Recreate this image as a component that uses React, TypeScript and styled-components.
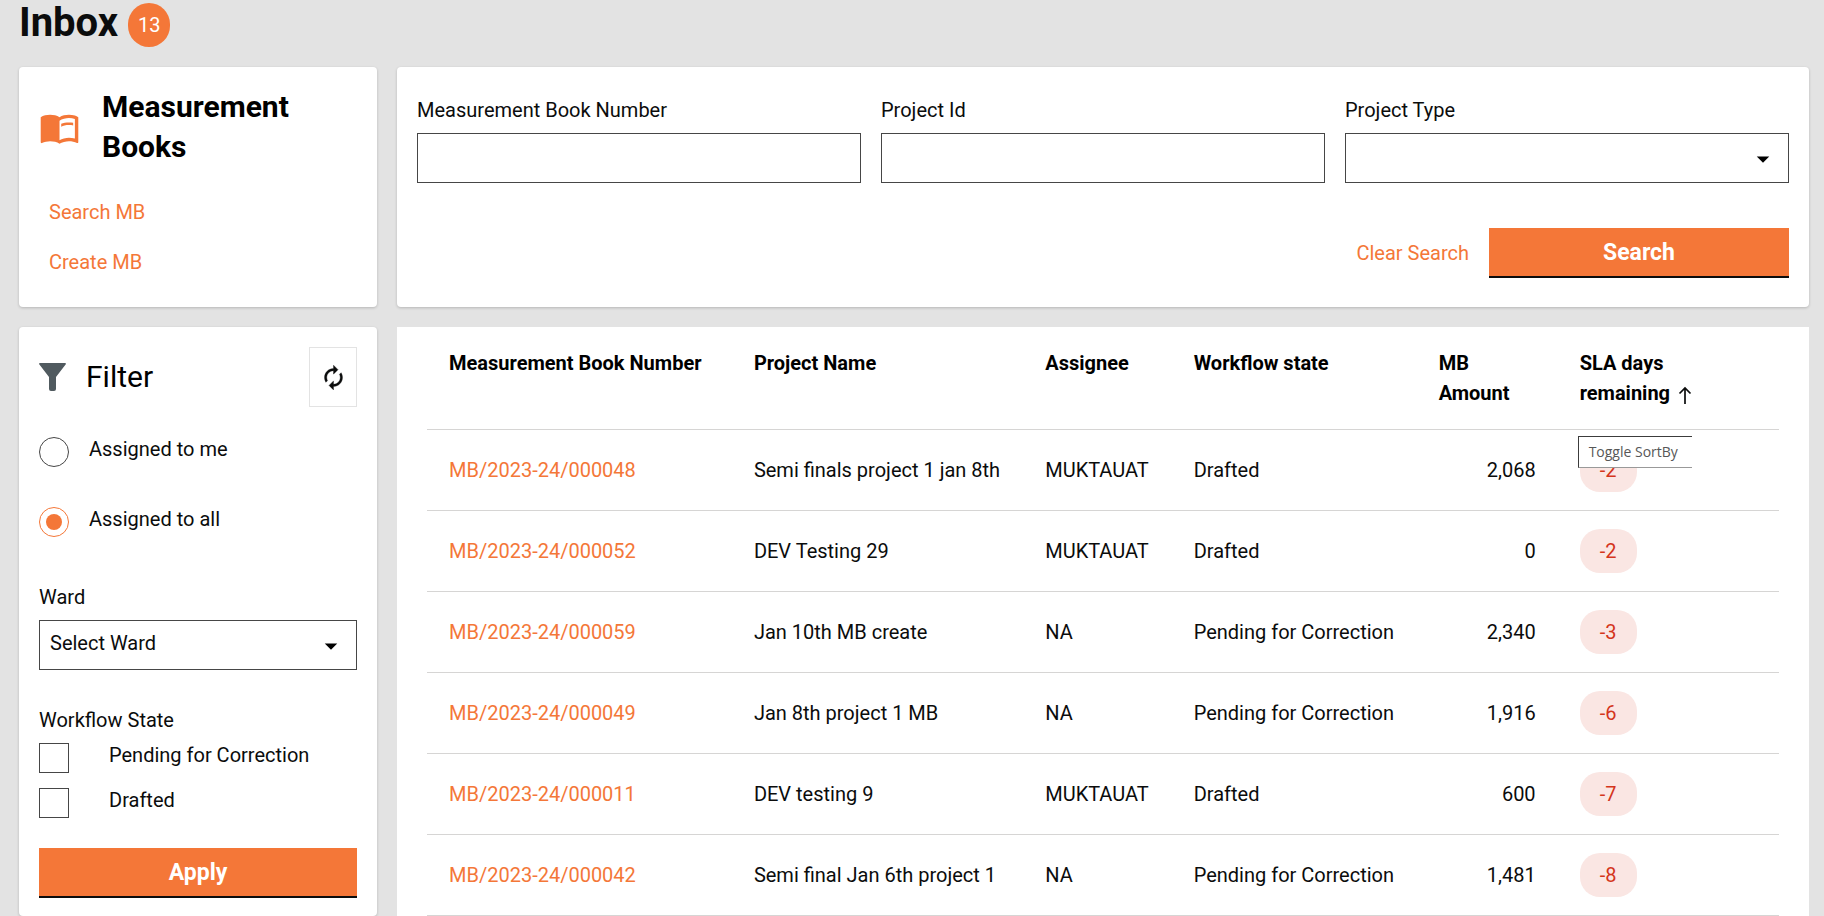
import React from "react";
import styled, { createGlobalStyle, css } from "styled-components";

const ORANGE = "#f47738";
const INK = "#0b0c0c";

const GlobalStyle = createGlobalStyle`
  *, *::before, *::after { box-sizing: border-box; }
  body {
    margin: 0;
    background: #e3e3e3;
    color: ${INK};
    font-family: Roboto, "Liberation Sans", sans-serif;
    font-size: 20px;
    line-height: 30px;
  }
  button, input, select { font: inherit; color: inherit; }
`;

const Page = styled.main`
  min-height: 100vh;
  padding: 0 15px 0 19px;
`;

const PageHeader = styled.header`
  display: flex;
  gap: 10px;
  height: 67px;
`;

const PageTitle = styled.h1`
  margin: 0;
  font-size: 40px;
  line-height: 46px;
  font-weight: 700;
`;

const CountBadge = styled.span`
  margin-top: 3px;
  width: 42px;
  height: 44px;
  border-radius: 22px;
  background: ${ORANGE};
  color: #fff;
  line-height: 44px;
  text-align: center;
`;

const Layout = styled.div`
  display: grid;
  grid-template-columns: 358px minmax(0, 1fr);
  gap: 20px;
`;

const card = css`
  background: #fff;
  border-radius: 4px;
  box-shadow: 0 1px 3px rgba(0, 0, 0, 0.2);
`;

const LinksCard = styled.nav`
  ${card}
  padding: 20px 20px 30px;
`;

const LinksHeading = styled.div`
  display: flex;
  align-items: center;
  gap: 22px;
  h2 {
    margin: 0;
    color: #000;
    font-size: 30px;
    line-height: 40px;
    font-weight: 700;
  }
`;

const LinkList = styled.ul`
  list-style: none;
  margin: 30px 0 0;
  padding: 0 0 0 10px;
  display: flex;
  flex-direction: column;
  gap: 20px;
`;

const TextLink = styled.a`
  color: ${ORANGE};
  text-decoration: none;
`;

const SearchCard = styled.form`
  ${card}
  padding: 28px 20px;
`;

const FieldRow = styled.div`
  display: grid;
  grid-template-columns: repeat(3, minmax(0, 1fr));
  gap: 20px;
`;

const Field = styled.div`
  display: flex;
  flex-direction: column;
  gap: 8px;
`;

const control = css`
  width: 100%;
  height: 50px;
  border: 1px solid #464646;
  border-radius: 0;
  background: #fff;
  outline: none;
`;

const TextInput = styled.input`
  ${control}
  padding: 0 10px;
`;

const SelectWrap = styled.div`
  position: relative;
  svg {
    position: absolute;
    right: 11px;
    top: 11px;
    pointer-events: none;
  }
`;

const Select = styled.select`
  ${control}
  appearance: none;
  padding: 0 40px 4px 10px;
`;

const SearchActions = styled.div`
  display: flex;
  justify-content: flex-end;
  align-items: center;
  gap: 20px;
  margin-top: 45px;
`;

const ClearButton = styled.button`
  padding: 0;
  border: 0;
  background: none;
  color: ${ORANGE};
`;

const PrimaryButton = styled.button<{ $width: string }>`
  width: ${(p) => p.$width};
  height: 50px;
  padding: 0;
  border: 0;
  background: ${ORANGE};
  box-shadow: inset 0 -2px 0 ${INK};
  color: #fff;
  font-size: 23px;
  font-weight: 700;
  line-height: 48px;
`;

const FilterCard = styled.form`
  ${card}
  align-self: start;
  padding: 20px 20px 18px;
`;

const FilterHeader = styled.div`
  display: flex;
  align-items: center;
  height: 60px;
  h2 {
    flex: 1;
    margin: 0 0 0 20px;
    color: #000;
    font-size: 30px;
    line-height: 40px;
    font-weight: 400;
  }
`;

const RefreshButton = styled.button`
  display: grid;
  place-items: center;
  width: 48px;
  height: 60px;
  padding: 0;
  border: 1px solid #e3e3e3;
  background: #fff;
`;

const RadioGroup = styled.div`
  display: flex;
  flex-direction: column;
  gap: 40px;
  margin: 30px 0 45px;
`;

const Option = styled.label<{ $gap: number }>`
  display: flex;
  align-items: flex-start;
  gap: ${(p) => p.$gap}px;
  height: 30px;
  line-height: 24px;
`;

const Radio = styled.input`
  appearance: none;
  display: grid;
  place-items: center;
  width: 30px;
  height: 30px;
  margin: 0;
  border: 1px solid #464646;
  border-radius: 50%;
  &:checked { border-color: ${ORANGE}; }
  &:checked::after {
    content: "";
    width: 16px;
    height: 16px;
    border-radius: 50%;
    background: ${ORANGE};
  }
`;

const Checkbox = styled.input`
  appearance: none;
  width: 30px;
  height: 30px;
  margin: 0;
  border: 1px solid #464646;
  &:checked { background: ${ORANGE}; }
`;

const StateGroup = styled.fieldset`
  display: flex;
  flex-direction: column;
  gap: 15px;
  margin: 35px 0 30px;
  padding: 0;
  border: 0;
  legend { padding: 0 0 8px; }
`;

const TableCard = styled.section`
  background: #fff;
  padding: 12px 30px 0;
`;

const Table = styled.table`
  width: 100%;
  table-layout: fixed;
  border-collapse: collapse;
`;

const HeadCell = styled.th`
  height: 90px;
  padding: 9px 0 20px 22px;
  border-bottom: 1px solid #d6d5d4;
  color: #000;
  font-weight: 700;
  text-align: left;
  vertical-align: top;
  svg { vertical-align: -5px; margin-left: 6px; }
`;

const SortCell = styled(HeadCell)`
  position: relative;
`;

const Cell = styled.td<{ $numeric?: boolean }>`
  height: 81px;
  padding: ${(p) => (p.$numeric ? "0 22px 0 0" : "0 0 0 22px")};
  border-bottom: 1px solid #d6d5d4;
  text-align: ${(p) => (p.$numeric ? "right" : "left")};
  white-space: nowrap;
`;

const SlaPill = styled.span`
  display: inline-block;
  width: 57px;
  height: 44px;
  border-radius: 20px;
  background: #fae6e3;
  color: #d4351c;
  line-height: 44px;
  text-align: center;
  vertical-align: middle;
`;

const Tooltip = styled.span`
  position: absolute;
  z-index: 1;
  left: 20px;
  top: 97px;
  width: 114px;
  height: 32px;
  padding-left: 10px;
  border: solid #3c3c3c;
  border-width: 1px 0 1px 1px;
  border-bottom-color: #999;
  background: #fff;
  color: #575757;
  font-family: "Open Sans", "Noto Sans", sans-serif;
  font-size: 14px;
  font-weight: 400;
  line-height: 30px;
  white-space: nowrap;
`;

const CaretIcon = () => (
  <svg width="30" height="30" viewBox="0 0 24 24" aria-hidden="true">
    <path d="M7 10l5 5 5-5z" fill="#000" />
  </svg>
);

const BookIcon = () => (
  <svg width="41" height="41" viewBox="0 0 24 24" fill={ORANGE} aria-hidden="true">
    <path d="M21 5c-1.110-.35-2.330-.5-3.500-.5-1.950 0-4.050.4-5.500 1.500-1.450-1.100-3.550-1.500-5.500-1.500S2.450 4.900 1 6v14.650c0 .25.25.5.5.5.1 0 .15-.05.25-.05C3.100 20.450 5.050 20 6.500 20c1.950 0 4.050.4 5.500 1.500 1.350-.85 3.800-1.500 5.500-1.500 1.650 0 3.350.3 4.750 1.050.1.05.15.05.25.05.25 0 .5-.25.5-.5V6c-.6-.45-1.250-.75-2-1zm0 13.500c-1.100-.35-2.300-.5-3.500-.5-1.700 0-4.150.65-5.500 1.500V8c1.350-.85 3.800-1.500 5.500-1.500 1.200 0 2.400.15 3.500.5v11.500z" />
    <path d="M17.500 10.500c.88 0 1.730.09 2.500.26V9.240c-.79-.15-1.640-.24-2.500-.24-1.700 0-3.240.29-4.500.83v1.660c1.130-.64 2.700-.99 4.500-.99z" />
  </svg>
);

const FunnelIcon = () => (
  <svg width="27" height="28" viewBox="0 0 27 28" fill="#505a5f" aria-hidden="true">
    <path d="M1 0h25q1.500 0 .6 1.600L17 14v12q0 2-2 2h-3q-2 0-2-2V14L.4 1.600Q-.5 0 1 0z" />
  </svg>
);

const RefreshIcon = () => (
  <svg width="27" height="27" viewBox="0 0 24 24" fill={INK} stroke={INK} strokeWidth="0.3" aria-hidden="true">
    <path d="M12 6v3l4-4-4-4v3c-4.420 0-8 3.580-8 8 0 1.570.46 3.030 1.240 4.260L6.700 14.800c-.45-.83-.7-1.790-.7-2.800 0-3.310 2.690-6 6-6zm6.760 1.740L17.300 9.200c.44.84.7 1.790.7 2.800 0 3.310-2.690 6-6 6v-3l-4 4 4 4v-3c4.420 0 8-3.580 8-8 0-1.570-.46-3.030-1.240-4.260z" />
  </svg>
);

const SortIcon = () => (
  <svg width="18" height="20" viewBox="0 0 18 20" fill="none" stroke={INK} strokeWidth="1.700" aria-hidden="true">
    <path d="M9 19V3M3.500 8.500L9 3l5.500 5.500" />
  </svg>
);

const rows = [
  ["MB/2023-24/000048", "Semi finals project 1 jan 8th", "MUKTAUAT", "Drafted", "2,068", "-2"],
  ["MB/2023-24/000052", "DEV Testing 29", "MUKTAUAT", "Drafted", "0", "-2"],
  ["MB/2023-24/000059", "Jan 10th MB create", "NA", "Pending for Correction", "2,340", "-3"],
  ["MB/2023-24/000049", "Jan 8th project 1 MB", "NA", "Pending for Correction", "1,916", "-6"],
  ["MB/2023-24/000011", "DEV testing 9", "MUKTAUAT", "Drafted", "600", "-7"],
  ["MB/2023-24/000042", "Semi final Jan 6th project 1", "NA", "Pending for Correction", "1,481", "-8"],
];

const columnWidths = ["22.55%", "21.55%", "10.98%", "18.12%", "10.43%", "16.37%"];

export default function App() {
  return (
    <>
      <GlobalStyle />
      <Page>
        <PageHeader>
          <PageTitle>Inbox</PageTitle>
          <CountBadge>13</CountBadge>
        </PageHeader>
        <Layout>
          <LinksCard>
            <LinksHeading>
              <BookIcon />
              <h2>Measurement<br />Books</h2>
            </LinksHeading>
            <LinkList>
              <li><TextLink href="#search-mb">Search MB</TextLink></li>
              <li><TextLink href="#create-mb">Create MB</TextLink></li>
            </LinkList>
          </LinksCard>

          <SearchCard onSubmit={(e) => e.preventDefault()}>
            <FieldRow>
              <Field>
                <label htmlFor="mb-number">Measurement Book Number</label>
                <TextInput id="mb-number" type="text" />
              </Field>
              <Field>
                <label htmlFor="project-id">Project Id</label>
                <TextInput id="project-id" type="text" />
              </Field>
              <Field>
                <label htmlFor="project-type">Project Type</label>
                <SelectWrap>
                  <Select id="project-type"><option value="" /></Select>
                  <CaretIcon />
                </SelectWrap>
              </Field>
            </FieldRow>
            <SearchActions>
              <ClearButton type="reset">Clear Search</ClearButton>
              <PrimaryButton type="submit" $width="300px">Search</PrimaryButton>
            </SearchActions>
          </SearchCard>

          <FilterCard onSubmit={(e) => e.preventDefault()}>
            <FilterHeader>
              <FunnelIcon />
              <h2>Filter</h2>
              <RefreshButton type="button" aria-label="Reset filters"><RefreshIcon /></RefreshButton>
            </FilterHeader>
            <RadioGroup role="radiogroup">
              <Option $gap={20}><Radio type="radio" name="assigned" />Assigned to me</Option>
              <Option $gap={20}><Radio type="radio" name="assigned" defaultChecked />Assigned to all</Option>
            </RadioGroup>
            <Field>
              <label htmlFor="ward">Ward</label>
              <SelectWrap>
                <Select id="ward"><option>Select Ward</option></Select>
                <CaretIcon />
              </SelectWrap>
            </Field>
            <StateGroup>
              <legend>Workflow State</legend>
              <Option $gap={40}><Checkbox type="checkbox" />Pending for Correction</Option>
              <Option $gap={40}><Checkbox type="checkbox" />Drafted</Option>
            </StateGroup>
            <PrimaryButton type="submit" $width="100%">Apply</PrimaryButton>
          </FilterCard>

          <TableCard>
            <Table>
              <colgroup>
                {columnWidths.map((width, i) => <col key={i} style={{ width }} />)}
              </colgroup>
              <thead>
                <tr>
                  <HeadCell>Measurement Book Number</HeadCell>
                  <HeadCell>Project Name</HeadCell>
                  <HeadCell>Assignee</HeadCell>
                  <HeadCell>Workflow state</HeadCell>
                  <HeadCell>MB<br />Amount</HeadCell>
                  <SortCell aria-sort="ascending">
                    SLA days<br />remaining<SortIcon />
                    <Tooltip role="tooltip">Toggle SortBy</Tooltip>
                  </SortCell>
                </tr>
              </thead>
              <tbody>
                {rows.map(([id, project, assignee, state, amount, sla]) => (
                  <tr key={id}>
                    <Cell><TextLink href={`#${id}`}>{id}</TextLink></Cell>
                    <Cell>{project}</Cell>
                    <Cell>{assignee}</Cell>
                    <Cell>{state}</Cell>
                    <Cell $numeric>{amount}</Cell>
                    <Cell><SlaPill>{sla}</SlaPill></Cell>
                  </tr>
                ))}
              </tbody>
            </Table>
          </TableCard>
        </Layout>
      </Page>
    </>
  );
}
